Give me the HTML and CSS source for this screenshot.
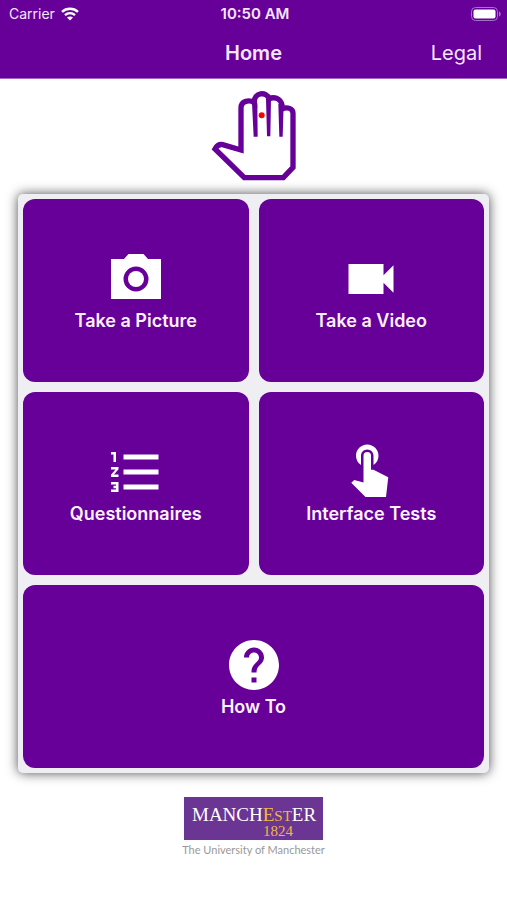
FILE: index.html
```
<!DOCTYPE html>
<html lang="en">
<head>
    <meta charset="UTF-8">
    <meta name="viewport" content="width=device-width, initial-scale=1.0">
    <title>Home</title>
    <link rel="stylesheet" href="styles.css">
</head>
<body>
    <header class="header">
        <div class="status-bar">
            <div class="carrier">
                <span>Carrier</span>
                <svg class="wifi" viewBox="0 0 18 14" aria-hidden="true">
                    <path d="M1 4.9C5.4.7 12.6.7 17 4.9" />
                    <path d="M4 8.1c2.8-2.6 7.2-2.6 10 0" />
                    <path class="dot" d="M9 13.6l-3-3.1c1.6-1.5 4.4-1.5 6 0z" />
                </svg>
            </div>
            <span class="time">10:50 AM</span>
            <svg class="battery" viewBox="0 0 30 14" aria-hidden="true">
                <rect class="shell" x="0.5" y="0.5" width="26" height="13" rx="4" />
                <rect class="level" x="2.5" y="2.5" width="22" height="9" rx="2" />
                <path class="cap" d="M28 4.5c2.3.8 2.3 4.2 0 5z" />
            </svg>
        </div>
        <nav class="nav-bar">
            <h1>Home</h1>
            <a class="legal" href="#legal">Legal</a>
        </nav>
    </header>

    <main>
        <svg class="hand" viewBox="0 0 321 312" role="img" aria-label="Hand">
            <path class="outline" d="M123 198V72C123 50 148 46 163 56C161 24 200 22 207 44C228 36 247 46 247 74C262 68 279 73 279 88V250L250 281H133L45 195C51 184 60 180 68 182Z" />
            <path class="gap" d="M156 58h16l1 100h-12zM198 44h15l-2 113h-10zM235 60h16l-3 98h-10z" />
            <circle class="spot" cx="185" cy="94" r="9" />
        </svg>

        <div class="panel">
            <button class="tile">
                <svg class="icon" viewBox="0 0 24 24" aria-hidden="true">
                    <path fill-rule="evenodd" d="M22 4h-5.2L15 2H9L7.200 4H2v16h20zM12 17a5 5 0 1 1 0-10 5 5 0 0 1 0 10z" />
                    <circle cx="12" cy="12" r="3.2" />
                </svg>
                <span>Take a Picture</span>
            </button>
            <button class="tile">
                <svg class="icon" viewBox="0 0 24 24" aria-hidden="true">
                    <path d="M17 10.500V6H3v12h14v-4.500l4 4v-11z" />
                </svg>
                <span>Take a Video</span>
            </button>
            <button class="tile">
                <svg class="icon" viewBox="0 0 24 24" aria-hidden="true">
                    <path d="M2 17h2v.5H3v1h1v.5H2v1h3v-4H2zM3 8h1V4H2v1h1zM2 11h1.800L2 13.100v.9h3v-1H3.200L5 10.900V10H2zM7 5v2h14V5zM7 19h14v-2H7zM7 13h14v-2H7z" />
                </svg>
                <span>Questionnaires</span>
            </button>
            <button class="tile">
                <svg class="icon" viewBox="0 0 24 24" aria-hidden="true">
                    <path d="M8 9.240V5.500C8 4.120 9.120 3 10.500 3S13 4.120 13 5.500v3.740c1.210-.81 2-2.180 2-3.740C15 3.010 12.990 1 10.500 1S6 3.010 6 5.500c0 1.560.79 2.930 2 3.740z" />
                    <path d="M9 16.200V5.500a1.500 1.500 0 0 1 3 0V11.100h1L18.900 14.100 18 22H9.800L4.100 16.300l1.200-1.100z" />
                </svg>
                <span>Interface Tests</span>
            </button>
            <button class="tile wide">
                <svg class="icon" viewBox="0 0 24 24" aria-hidden="true">
                    <path d="M12 2C6.480 2 2 6.480 2 12s4.480 10 10 10 10-4.480 10-10S17.520 2 12 2zm1 17h-2v-2h2v2zm2.070-7.750l-.9.920C13.450 12.900 13 13.500 13 15h-2v-.5c0-1.100.450-2.100 1.170-2.830l1.240-1.260c.370-.360.590-.860.590-1.410 0-1.100-.9-2-2-2s-2 .9-2 2H8c0-2.210 1.790-4 4-4s4 1.790 4 4c0 .880-.360 1.680-.930 2.250z" />
                </svg>
                <span>How To</span>
            </button>
        </div>
    </main>

    <footer class="footer">
        <div class="logo">
            <span class="logo-name">MANCH<span class="gold">E<small>ST</small></span>ER</span>
            <span class="logo-year">1824</span>
        </div>
        <p>The University of Manchester</p>
    </footer>
</body>
</html>
```
FILE: styles.css
```
:root {
    --purple: #660099;
    --panel-bg: #efeef3;
    --logo-bg: #6b3594;
    --gold: #f0b840;
}

* {
    margin: 0;
    padding: 0;
    box-sizing: border-box;
}

body {
    background-color: white;
    font-family: Inter, 'Liberation Sans', sans-serif;
}

.header {
    background-color: var(--purple);
    border-bottom: 1px solid #a766c6;
    color: #f6e6fc;
}

.status-bar {
    display: grid;
    grid-template-columns: 1fr auto 1fr;
    align-items: center;
    height: 27px;
    padding: 0 6px 0 9px;
    font-size: 14px;
}

.carrier {
    display: flex;
    align-items: center;
    gap: 6px;
}

.wifi {
    width: 18px;
    height: 14px;
    fill: none;
    stroke: white;
    stroke-width: 2.4;
}

.wifi .dot {
    fill: white;
    stroke: none;
}

.time {
    font-size: 15px;
    font-weight: 600;
}

.battery {
    justify-self: end;
    width: 30px;
    height: 14px;
    fill: white;
}

.battery .shell {
    fill: none;
    stroke: #a871c6;
}

.battery .cap {
    fill: #a871c6;
}

.nav-bar {
    display: grid;
    grid-template-columns: 1fr auto 1fr;
    align-items: center;
    height: 51px;
    padding: 0 25px;
}

.nav-bar h1 {
    grid-column: 2;
    font-size: 20px;
    font-weight: 600;
}

.legal {
    justify-self: end;
    color: inherit;
    font-size: 20px;
    text-decoration: none;
}

.hand {
    display: block;
    width: 107px;
    height: 104px;
    margin: 5px auto 6px;
}

.hand .outline {
    fill: white;
    stroke: var(--purple);
    stroke-width: 16;
}

.hand .gap {
    fill: var(--purple);
}

.hand .spot {
    fill: #f00;
}

.panel {
    display: grid;
    grid-template-columns: 1fr 1fr;
    gap: 10px;
    margin: 0 18px;
    padding: 5px;
    background-color: var(--panel-bg);
    border-radius: 5px;
    box-shadow: 0 0 12px rgba(0, 0, 0, 0.7);
}

.tile {
    display: flex;
    flex-direction: column;
    align-items: center;
    justify-content: center;
    min-height: 183px;
    border: none;
    border-radius: 12px;
    background-color: var(--purple);
    color: #fbf0ff;
    font-family: inherit;
    font-size: 18px;
    font-weight: 600;
    line-height: 23px;
    cursor: pointer;
}

.tile.wide {
    grid-column: span 2;
}

.icon {
    width: 60px;
    height: 60px;
    fill: white;
}

.footer {
    display: flex;
    flex-direction: column;
    align-items: center;
    padding: 24px 0;
}

.logo {
    display: flex;
    flex-direction: column;
    width: 139px;
    height: 43px;
    padding: 10px 0 0 8px;
    background-color: var(--logo-bg);
    color: white;
    font-family: 'Liberation Serif', serif;
    font-size: 19px;
    line-height: 15px;
}

.logo small {
    font-size: 15px;
}

.gold,
.logo-year {
    color: var(--gold);
}

.logo-year {
    padding-left: 71px;
    font-size: 15px;
}

.footer p {
    color: #999;
    font-family: Lato, sans-serif;
    font-size: 11px;
    line-height: 19px;
}
```
